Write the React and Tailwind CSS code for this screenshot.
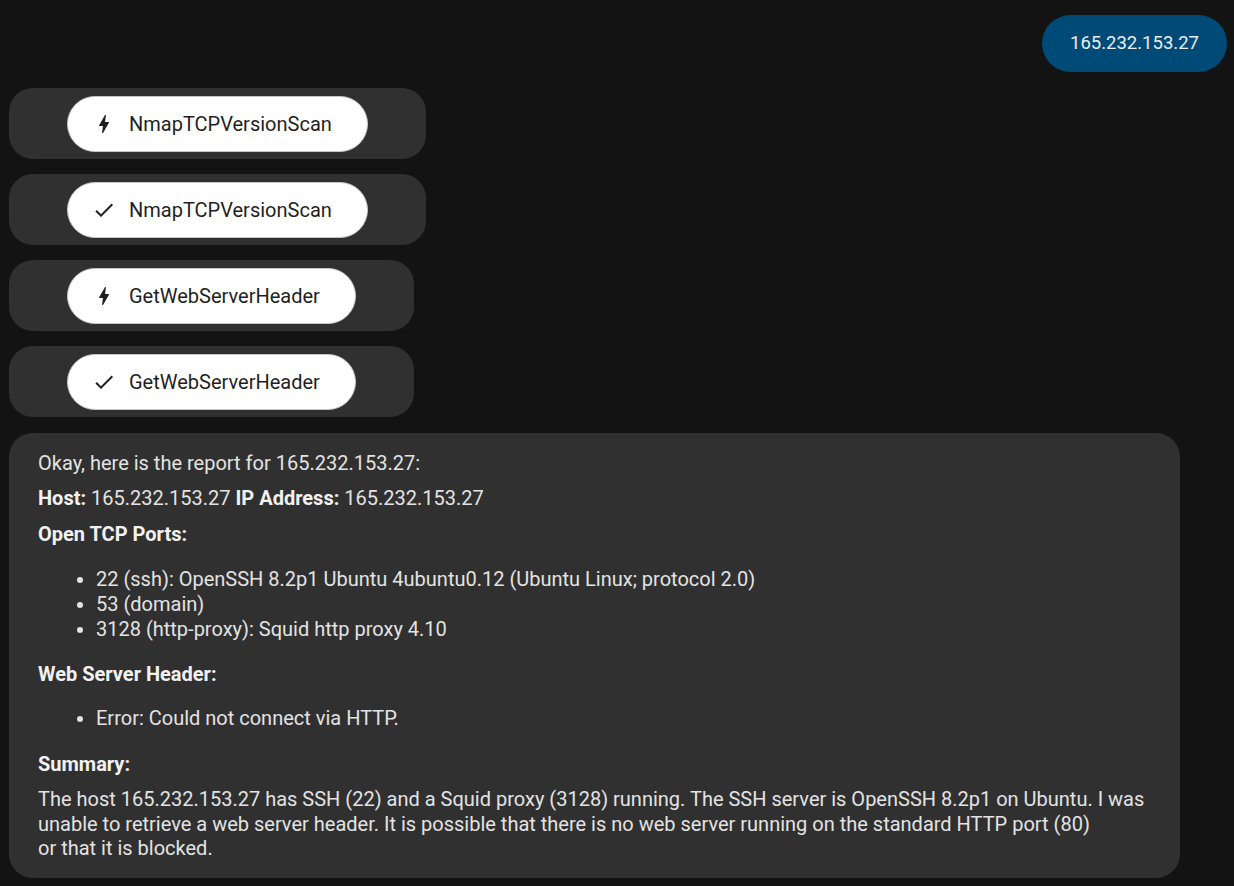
import React from "react";

const ip = "165.232.153.27";

function BoltIcon() {
  return (
    <svg width="24" height="24" viewBox="0 0 24 24" fill="#1f1f1f">
      <path d="M11 21h-1l1-7H7.5c-.58 0-.57-.32-.38-.66.19-.34.05-.08.07-.12C8.48 10.94 10.42 7.54 13 3h1l-1 7h3.5c.49 0 .56.33.47.51l-.07.15C12.96 17.55 11 21 11 21z" />
    </svg>
  );
}

function CheckIcon() {
  return (
    <svg width="24" height="24" viewBox="0 0 24 24" fill="#1f1f1f">
      <path d="M9 16.17L4.83 12l-1.42 1.41L9 19 21 7l-1.41-1.41z" />
    </svg>
  );
}

function ToolCall({ done, name }) {
  return (
    <div className="self-start rounded-[24px] bg-[#303030] px-[58px] pt-2 pb-[7px]">
      <div className="flex h-[56px] items-center gap-[13px] rounded-full border border-[#c4c7c5] bg-white pl-[24px] pr-[35px] text-[20px] text-[#1f1f1f]">
        {done ? <CheckIcon /> : <BoltIcon />}
        <span>{name}</span>
      </div>
    </div>
  );
}

export default function App() {
  return (
    <div
      className="min-h-screen w-full bg-[#131313] pl-[9px] pr-[7px] pt-[15px] pb-2 flex flex-col gap-[15px] text-[20px] leading-[25px] text-[#e3e3e3]"
      style={{ fontFamily: "Roboto, 'Noto Sans', sans-serif" }}
    >
      {/* user message */}
      <div className="self-end mb-px flex h-[57px] items-center rounded-full bg-[#004a77] px-[28px] text-[18.5px] text-[#e8eef3]">
        {ip}
      </div>

      <ToolCall name="NmapTCPVersionScan" />
      <ToolCall done name="NmapTCPVersionScan" />
      <ToolCall name="GetWebServerHeader" />
      <ToolCall done name="GetWebServerHeader" />

      {/* report */}
      <div className="mt-px w-[1171px] rounded-[24px] bg-[#303030] pl-[29px] pr-[16px] pt-[18px] pb-[17px]">
        <p>Okay, here is the report for {ip}:</p>
        <p className="mt-[10px]">
          <strong className="font-bold text-[#f2f2f2]">Host:</strong> {ip}{" "}
          <strong className="font-bold text-[#f2f2f2]">IP Address:</strong> {ip}
        </p>
        <p className="mt-[11px] font-bold text-[#f2f2f2]">Open TCP Ports:</p>
        <ul className="mt-[20px] list-disc pl-[58px]">
          <li>22 (ssh): OpenSSH 8.2p1 Ubuntu 4ubuntu0.12 (Ubuntu Linux; protocol 2.0)</li>
          <li>53 (domain)</li>
          <li>3128 (http-proxy): Squid http proxy 4.10</li>
        </ul>
        <p className="mt-[20px] font-bold text-[#f2f2f2]">Web Server Header:</p>
        <ul className="mt-[19px] list-disc pl-[58px]">
          <li>Error: Could not connect via HTTP.</li>
        </ul>
        <p className="mt-[21px] font-bold text-[#f2f2f2]">Summary:</p>
        <p className="mt-[10px] leading-[24.5px]">
          The host {ip} has SSH (22) and a Squid proxy (3128) running. The SSH server is OpenSSH 8.2p1 on Ubuntu. I was
          <br />
          unable to retrieve a web server header. It is possible that there is no web server running on the standard HTTP
          port (80)
          <br />
          or that it is blocked.
        </p>
      </div>
    </div>
  );
}
